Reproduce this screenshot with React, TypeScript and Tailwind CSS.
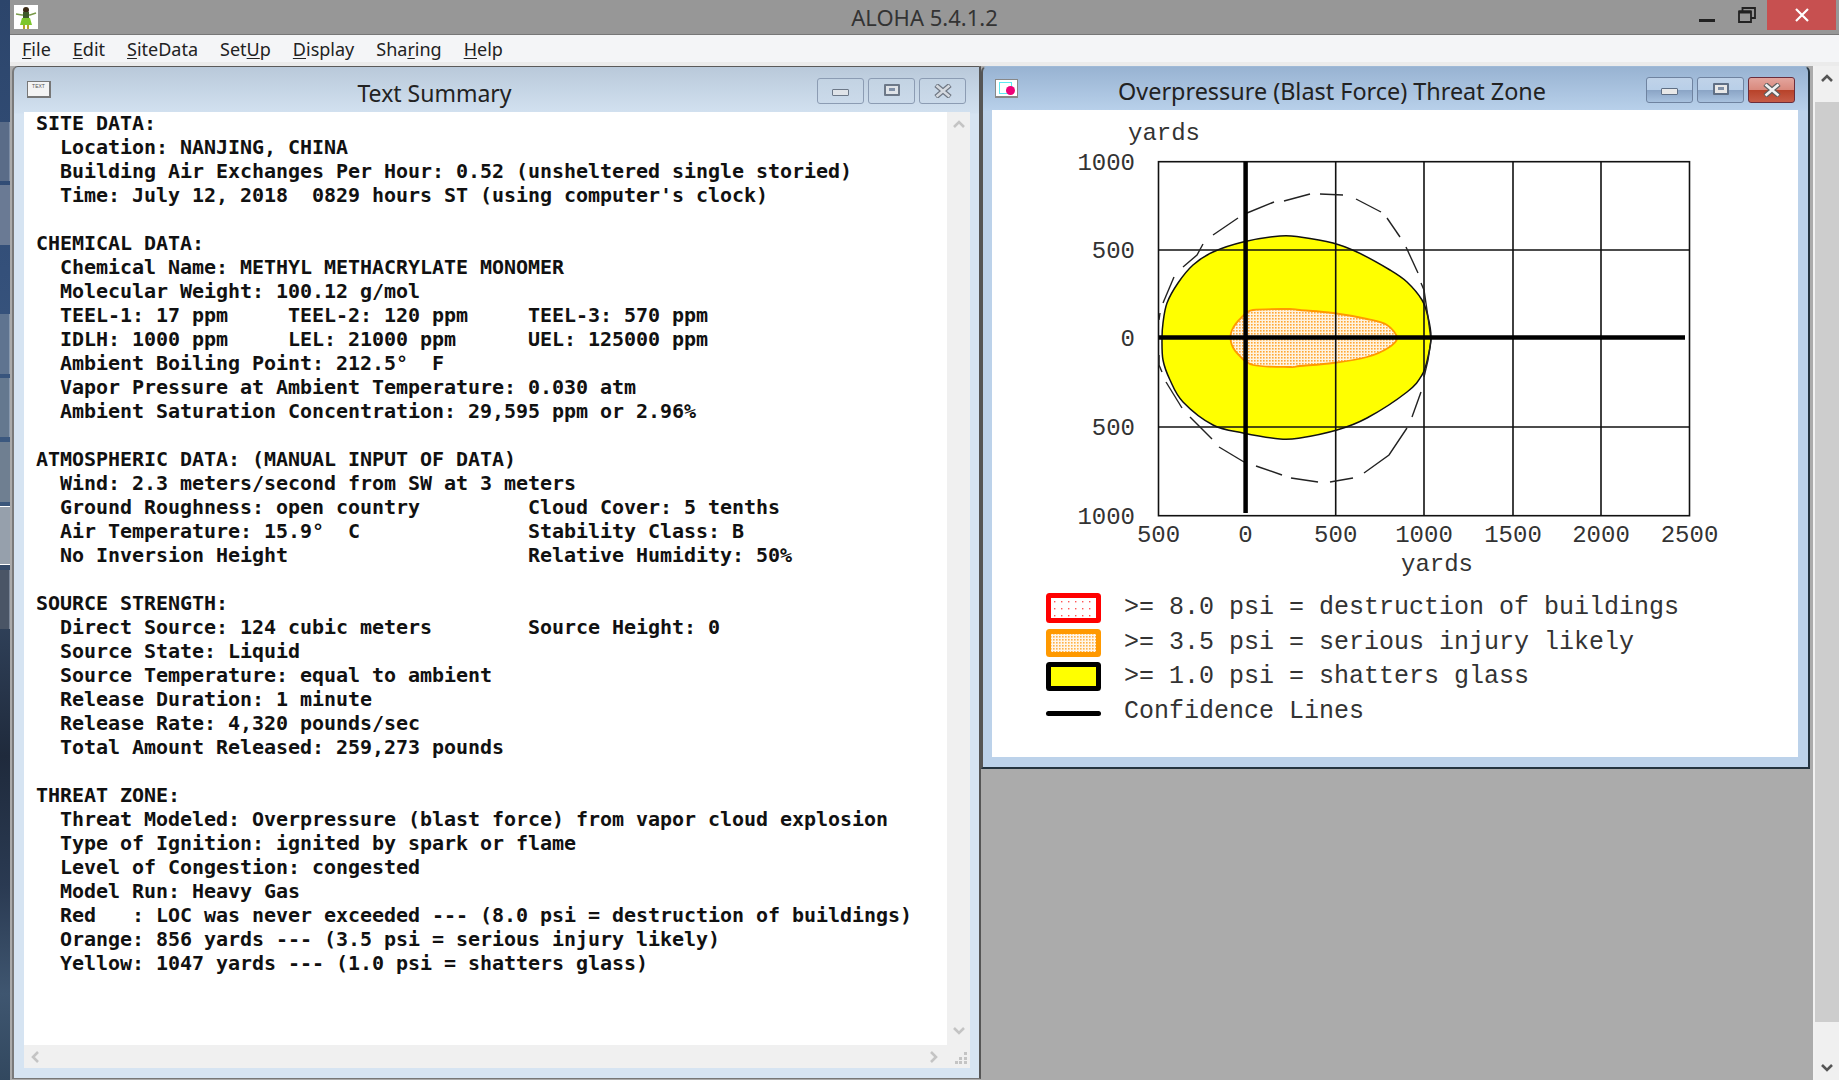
import React from 'react';

const SUMMARY = `SITE DATA:
  Location: NANJING, CHINA
  Building Air Exchanges Per Hour: 0.52 (unsheltered single storied)
  Time: July 12, 2018  0829 hours ST (using computer's clock)

CHEMICAL DATA:
  Chemical Name: METHYL METHACRYLATE MONOMER
  Molecular Weight: 100.12 g/mol
  TEEL-1: 17 ppm     TEEL-2: 120 ppm     TEEL-3: 570 ppm
  IDLH: 1000 ppm     LEL: 21000 ppm      UEL: 125000 ppm
  Ambient Boiling Point: 212.5°  F
  Vapor Pressure at Ambient Temperature: 0.030 atm
  Ambient Saturation Concentration: 29,595 ppm or 2.96%

ATMOSPHERIC DATA: (MANUAL INPUT OF DATA)
  Wind: 2.3 meters/second from SW at 3 meters
  Ground Roughness: open country         Cloud Cover: 5 tenths
  Air Temperature: 15.9°  C              Stability Class: B
  No Inversion Height                    Relative Humidity: 50%

SOURCE STRENGTH:
  Direct Source: 124 cubic meters        Source Height: 0
  Source State: Liquid
  Source Temperature: equal to ambient
  Release Duration: 1 minute
  Release Rate: 4,320 pounds/sec
  Total Amount Released: 259,273 pounds

THREAT ZONE:
  Threat Modeled: Overpressure (blast force) from vapor cloud explosion
  Type of Ignition: ignited by spark or flame
  Level of Congestion: congested
  Model Run: Heavy Gas
  Red   : LOC was never exceeded --- (8.0 psi = destruction of buildings)
  Orange: 856 yards --- (3.5 psi = serious injury likely)
  Yellow: 1047 yards --- (1.0 psi = shatters glass)`;

// chart points are screen positions, the svg starts at 992,110
type P = [number, number];
const sx = (x: number) => x - 992;
const sy = (y: number) => y - 110;

// closed catmull-rom so the outline goes through every measured point
const smooth = (pts: P[]) => {
  const m = pts.map(([x, y]) => [sx(x), sy(y)]);
  const n = m.length;
  let d = `M${m[0][0]} ${m[0][1]}`;
  for (let i = 0; i < n; i++) {
    const p0 = m[(i - 1 + n) % n];
    const p1 = m[i];
    const p2 = m[(i + 1) % n];
    const p3 = m[(i + 2) % n];
    const c1 = [p1[0] + (p2[0] - p0[0]) / 6, p1[1] + (p2[1] - p0[1]) / 6];
    const c2 = [p2[0] - (p3[0] - p1[0]) / 6, p2[1] - (p3[1] - p1[1]) / 6];
    d += `C${c1[0].toFixed(1)} ${c1[1].toFixed(1)} ${c2[0].toFixed(1)} ${c2[1].toFixed(1)} ${p2[0]} ${p2[1]}`;
  }
  return d + 'Z';
};

const YELLOW: P[] = [
  [1300, 237], [1333, 243], [1357, 252], [1390, 270], [1407, 282], [1422, 300], [1428, 317], [1431, 337],
  [1428, 357], [1422, 375], [1407, 392], [1367, 418], [1337, 430], [1300, 438], [1280, 439], [1243, 433],
  [1213, 425], [1183, 402], [1170, 380], [1163, 360], [1162, 338], [1163, 323], [1167, 303], [1178, 283],
  [1193, 265], [1213, 252], [1243, 242], [1280, 236],
];
const ORANGE: P[] = [
  [1300, 310], [1333, 313], [1367, 319], [1387, 325], [1397, 338], [1388, 348], [1367, 357], [1333, 363],
  [1300, 366], [1290, 367], [1253, 365], [1237, 353], [1231, 342], [1232, 330], [1242, 317], [1253, 310],
  [1290, 309],
];
const DASHES: P[][] = [
  [[1406, 247], [1418, 273]],
  [[1421, 283], [1424, 290], [1428, 317], [1431, 340], [1428, 360], [1424, 377]],
  [[1421, 392], [1412, 417]],
  [[1407, 428], [1389, 455], [1364, 473]],
  [[1353, 478], [1330, 482]],
  [[1318, 482], [1291, 478]],
  [[1282, 475], [1256, 466]],
  [[1244, 462], [1219, 447]],
  [[1212, 439], [1190, 417]],
  [[1182, 408], [1166, 382]],
  [[1162, 372], [1159, 365], [1159, 355]],
  [[1159, 320], [1160, 313]],
  [[1163, 303], [1174, 277]],
  [[1183, 267], [1197, 255], [1203, 244]],
  [[1213, 235], [1238, 218]],
  [[1247, 213], [1274, 202]],
  [[1284, 201], [1310, 194]],
  [[1320, 194], [1343, 195]],
  [[1356, 199], [1381, 212]],
  [[1387, 218], [1400, 237]],
];

const LEFT = 1158.5;
const RIGHT = 1689.5;
const TOP = 161.7;
const BOTTOM = 515.7;
const GRID_X = [1335.7, 1424, 1513, 1601];
const GRID_Y = [250, 427];
const X_LABELS: [number, string][] = [
  [1158.5, '500'], [1245.5, '0'], [1335.7, '500'], [1424, '1000'], [1513, '1500'], [1601, '2000'], [1689.5, '2500'],
];
const Y_LABELS: [number, string][] = [[161.7, '1000'], [250, '500'], [337.6, '0'], [427, '500'], [515.7, '1000']];

const Chevron = ({ dir, className }: { dir: 'up' | 'down' | 'left' | 'right'; className?: string }) => {
  const d = {
    up: 'M1 8 L6 3 L11 8',
    down: 'M1 3 L6 8 L11 3',
    left: 'M8 1 L3 6 L8 11',
    right: 'M3 1 L8 6 L3 11',
  }[dir];
  return (
    <svg width="12" height="12" viewBox="0 0 12 12" className={className}>
      <path d={d} fill="none" stroke="currentColor" strokeWidth="2.6" />
    </svg>
  );
};

const CaptionButtons = ({ active }: { active: boolean }) => {
  const base = active
    ? 'bg-[linear-gradient(180deg,#c0d3e9_0%,#b9cfe8_48%,#8ba5c6_52%,#a9c2df_100%)] border-[#6f83a0]'
    : 'bg-[linear-gradient(180deg,#c3d3e3_0%,#cbdaea_100%)] border-[#8c9cb3]';
  const glyph = active ? 'border-[#5f6f85] bg-[#e8e8e8]' : 'border-[#6c7888] bg-[#dfe3e8]';
  return (
    <div className="flex gap-[4px] mt-[2px]">
      <div className={`w-[47px] h-[26px] rounded-[3px] border flex items-center justify-center ${base}`}>
        <div className={`w-[17px] h-[7px] mt-[4px] rounded-[1px] border ${glyph}`} />
      </div>
      <div className={`w-[47px] h-[26px] rounded-[3px] border flex items-center justify-center ${base}`}>
        <div className={`w-[16px] h-[12px] mt-[-2px] rounded-[1px] border-2 flex items-center justify-center ${glyph}`}>
          <div className="w-[6px] h-[3px] bg-[#7f8fa6]" />
        </div>
      </div>
      <div
        className={`w-[47px] h-[26px] rounded-[3px] border flex items-center justify-center ${
          active
            ? 'bg-[linear-gradient(180deg,#e3a59d_0%,#d98a7e_48%,#b8432a_52%,#c65c48_100%)] border-[#6b2d3c]'
            : base
        }`}
      >
        <svg width="18" height="14" viewBox="0 0 18 14">
          <path d="M2 1 L16 13 M16 1 L2 13" stroke={active ? '#5e5e5e' : '#6e7682'} strokeWidth="5" />
          <path d="M2.5 1.5 L15.5 12.5 M15.5 1.5 L2.5 12.5" stroke={active ? '#f2f2f2' : '#d5dae0'} strokeWidth="2.6" />
        </svg>
      </div>
    </div>
  );
};

const Swatch = ({ border, dot, fill, id, h }: { border: string; dot?: string; fill: string; id: string; h: number }) => (
  <svg width="55" height={h} viewBox={`0 0 55 ${h}`} className="shrink-0">
    <defs>
      <pattern id={id} width={id === 'sw-red' ? 7 : 3} height={id === 'sw-red' ? 7 : 3} patternUnits="userSpaceOnUse">
        <rect width="7" height="7" fill={fill} />
        {dot && <rect x="1" y="1" width={id === 'sw-red' ? 1.4 : 1.6} height={id === 'sw-red' ? 1.4 : 1.6} fill={dot} />}
      </pattern>
    </defs>
    <rect x="2.5" y="2.5" width="50" height={h - 5} rx="1" fill={dot ? `url(#${id})` : fill} stroke={border} strokeWidth="5" />
  </svg>
);

const Legend = ({ children, swatch }: { children: string; swatch: React.ReactNode }) => (
  <div className="flex items-center h-[34.4px] gap-[23px]">
    <div className="w-[55px] flex items-center justify-center">{swatch}</div>
    <span className="whitespace-pre">{children}</span>
  </div>
);

const Chart = () => (
  <svg width="806" height="475" viewBox="0 0 806 475" className="block">
    <defs>
      <pattern id="orange-dots" width="3" height="3" patternUnits="userSpaceOnUse">
        <rect width="3" height="3" fill="#fff3e0" />
        <rect x="1" y="1" width="1.6" height="1.6" fill="#ffa733" />
      </pattern>
    </defs>
    <rect x={sx(LEFT)} y={sy(TOP)} width={RIGHT - LEFT} height={BOTTOM - TOP} fill="#fff" stroke="#111" strokeWidth="1.6" />
    <path d={smooth(YELLOW)} fill="#ffff00" stroke="#111" strokeWidth="1.5" />
    <path d={smooth(ORANGE)} fill="url(#orange-dots)" stroke="#ff9900" strokeWidth="1.8" />
    {GRID_X.map((x) => (
      <line key={x} x1={sx(x)} x2={sx(x)} y1={sy(TOP)} y2={sy(BOTTOM)} stroke="#111" strokeWidth="1.6" />
    ))}
    {GRID_Y.map((y) => (
      <line key={y} x1={sx(LEFT)} x2={sx(RIGHT)} y1={sy(y)} y2={sy(y)} stroke="#111" strokeWidth="1.6" />
    ))}
    {DASHES.map((seg, i) => (
      <polyline
        key={i}
        points={seg.map(([x, y]) => `${sx(x)},${sy(y)}`).join(' ')}
        fill="none"
        stroke="#222"
        strokeWidth="1.4"
      />
    ))}
    <line x1={sx(1245.6)} x2={sx(1245.6)} y1={sy(TOP)} y2={sy(513)} stroke="#000" strokeWidth="4.5" />
    <line x1={sx(1159)} x2={sx(1685)} y1={sy(337.5)} y2={sy(337.5)} stroke="#000" strokeWidth="4.5" />
    <g fontFamily="'Liberation Mono', monospace" fontSize="24" fill="#333">
      <text x="136" y="30">yards</text>
      {Y_LABELS.map(([y, t], i) => (
        <text key={i} x="143" y={sy(y) + 8} textAnchor="end">{t}</text>
      ))}
      {X_LABELS.map(([x, t], i) => (
        <text key={i} x={sx(x)} y="432" textAnchor="middle">{t}</text>
      ))}
      <text x="445" y="461" textAnchor="middle">yards</text>
    </g>
  </svg>
);

const TextWindow = () => (
  <div className="w-[969px] h-[1013px] ml-[2px] flex flex-col rounded-tl-[6px] border-l-2 border-t border-r-2 border-b border-t-[#5a5a5a] border-l-[#7a7a7a] border-r-[#555] border-b-[#777] bg-[#d6e4f2] bg-[linear-gradient(180deg,#b9c9da_0px,#d2e1f0_46px,#d6e4f2_47px)]">
    <div className="h-[45px] shrink-0 flex items-center pl-[13px] pr-[13px]">
      <div className="w-[24px] h-[17px] border border-[#777] border-b-2 border-r-2 bg-[#f4f4f4] flex justify-center overflow-hidden">
        <span className="text-[5px] leading-[8px] text-[#555] font-['Liberation_Sans',sans-serif]">TEXT</span>
      </div>
      <div className="flex-1 text-center text-[#222] text-[23px] leading-none mt-[7px] ml-[1px] font-['Noto_Sans',sans-serif]">Text Summary</div>
      <CaptionButtons active={false} />
    </div>
    <div className="flex-1 flex flex-col ml-[10px] mr-[9px] mb-[10px] min-h-0">
      <div className="flex-1 flex min-h-0">
        <div className="flex-1 bg-white pl-[12px] overflow-hidden">
          <pre className="mt-[-1px] font-['DejaVu_Sans_Mono',monospace] font-bold text-[20px] leading-[24px] tracking-[-0.04px] text-[#111]">{SUMMARY}</pre>
        </div>
        <div className="w-[23px] bg-[#f0f0f0] flex flex-col items-center justify-between pt-[7px] pb-[8px] text-[#c4c4c4]">
          <Chevron dir="up" />
          <Chevron dir="down" />
        </div>
      </div>
      <div className="h-[23px] shrink-0 bg-[#f0f0f0] flex items-center justify-between pl-[6px] pr-[2px] text-[#c4c4c4]">
        <Chevron dir="left" />
        <div className="flex items-center gap-[14px]">
          <Chevron dir="right" />
          <svg width="14" height="14" viewBox="0 0 14 14" className="mt-[3px]">
            <path d="M10 1h3v3h-3zM5 6h3v3H5zM10 6h3v3h-3zM1 10h3v3H1zM5 10h3v3H5zM10 10h3v3h-3z" fill="#c4c4c4" />
          </svg>
        </div>
      </div>
    </div>
  </div>
);

const ThreatWindow = () => (
  <div className="w-[829px] h-[703px] flex flex-col rounded-t-[6px] border-t border-[#9fb9d6] border-r-2 border-r-[#23333f] border-b-2 border-b-[#23333f] border-l-2 border-l-[#555] bg-[#bcd2ea] bg-[linear-gradient(180deg,#98b3d2_0px,#b8d0ea_43px,#bcd2ea_44px)]">
    <div className="h-[43px] shrink-0 flex items-center pl-[12px] pr-[13px]">
      <div className="w-[23px] h-[19px] border border-[#888] border-b-2 bg-white relative">
        <div className="absolute left-[3px] top-[2px] w-[13px] h-[12px] border border-[#5fe8f0]" />
        <div className="absolute left-[10px] top-[6px] w-[9px] h-[9px] rounded-full bg-[#ee0077]" />
      </div>
      <div className="flex-1 text-center text-[#222] text-[23.4px] leading-none mt-[7px] font-['Noto_Sans',sans-serif]">
        Overpressure (Blast Force) Threat Zone
      </div>
      <CaptionButtons active />
    </div>
    <div className="flex-1 ml-[9px] mr-[10px] mb-[10px] bg-white flex flex-col">
      <Chart />
      <div className="pl-[54px] mt-[6px] font-['Liberation_Mono',monospace] text-[25px] text-[#333]">
        <Legend swatch={<Swatch id="sw-red" border="#ff0000" dot="#ff5555" fill="#ffffff" h={30} />}>{'>= 8.0 psi = destruction of buildings'}</Legend>
        <Legend swatch={<Swatch id="sw-orange" border="#ff9900" dot="#ffb347" fill="#fff6ea" h={28} />}>{'>= 3.5 psi = serious injury likely'}</Legend>
        <Legend swatch={<Swatch id="sw-yellow" border="#000000" fill="#ffff00" h={29} />}>{'>= 1.0 psi = shatters glass'}</Legend>
        <Legend swatch={<div className="w-[55px] h-[5px] rounded-full bg-black mt-[4px]" />}>Confidence Lines</Legend>
      </div>
    </div>
  </div>
);

const Wallpaper = () => (
  <div className="w-[10px] h-full shrink-0 flex flex-col bg-[linear-gradient(180deg,#2c456b_0%,#34507a_25%,#3d5a80_45%,#2f4058_58%,#1f2a3c_70%,#2a3a52_82%,#3f5670_92%,#32485f_100%)]">
    <div className="h-[122px] shrink-0" />
    <div className="h-[59px] shrink-0 mb-[4px] bg-[#5a6c88] border-r border-[#7c8ca4]" />
    <div className="h-[60px] shrink-0 bg-[#6a7a94]" />
    <div className="h-[69px] shrink-0" />
    <div className="h-[60px] shrink-0 mb-[4px] bg-[#5f7490] border-r border-[#8899ae]" />
    <div className="h-[59px] shrink-0 mb-[5px] bg-[#64788f] border-r border-[#8899ae]" />
    <div className="h-[60px] shrink-0 mb-[4px] bg-[#6f7f91]" />
    <div className="h-[59px] shrink-0 mb-[5px] bg-[#96a0ac] border-y border-white" />
    <div className="h-[59px] shrink-0 bg-[#4a5566] border-r border-[#7c8798]" />
  </div>
);

export default function App() {
  return (
    <div className="w-[1839px] h-[1080px] flex overflow-hidden bg-[#ababab] font-['Noto_Sans',sans-serif]">
      <Wallpaper />
      <div className="flex-1 flex flex-col min-w-0">
        <div className="h-[35px] shrink-0 bg-[#979797] border-b border-[#777] flex items-start justify-between relative">
          <div className="absolute inset-0 text-center text-[#333] text-[22px] leading-[34px]">ALOHA 5.4.1.2</div>
          <div className="relative w-[24px] h-[24px] ml-[4px] mt-[5px] bg-white shrink-0">
            <svg width="24" height="24" viewBox="0 0 24 24">
              <circle cx="12" cy="5" r="3" fill="#3a2a14" />
              <path d="M2 9 L8 10 L16 10 L22 8" stroke="#7a9a4a" strokeWidth="1.6" fill="none" />
              <rect x="9" y="7" width="6" height="6" fill="#3f5a2a" />
              <path d="M8 13 H16 L18 20 H6 Z" fill="#7ec62e" />
              <rect x="9" y="20" width="2" height="4" fill="#b5a52a" />
              <rect x="13" y="20" width="2" height="4" fill="#b5a52a" />
            </svg>
          </div>
          <div className="relative flex items-start shrink-0">
            <div className="w-[40px] h-[30px] flex items-center justify-center">
              <div className="w-[16px] h-[3px] mt-[10px] bg-[#222]" />
            </div>
            <div className="w-[40px] h-[30px] flex items-center justify-center">
              <svg width="18" height="16" viewBox="0 0 18 16">
                <path d="M1 4.5H13V15H1Z M4.5 4V1H17V11H13.5" fill="none" stroke="#222" strokeWidth="1.8" />
                <path d="M1 5H13" stroke="#222" strokeWidth="3" />
              </svg>
            </div>
            <div className="w-[69px] h-[30px] mr-[3px] bg-[#c75050] flex items-center justify-center">
              <svg width="14" height="14" viewBox="0 0 14 14">
                <path d="M1 1 L13 13 M13 1 L1 13" stroke="#fff" strokeWidth="2.2" />
              </svg>
            </div>
          </div>
        </div>
        <div className="h-[27px] shrink-0 bg-[#f4f5f7] flex items-center pl-[12px] pt-[2px] gap-[22px] text-[18px] text-[#222]">
          <span><span className="underline underline-offset-2">F</span>ile</span>
          <span><span className="underline underline-offset-2">E</span>dit</span>
          <span><span className="underline underline-offset-2">S</span>iteData</span>
          <span>Set<span className="underline underline-offset-2">U</span>p</span>
          <span><span className="underline underline-offset-2">D</span>isplay</span>
          <span>Sha<span className="underline underline-offset-2">r</span>ing</span>
          <span><span className="underline underline-offset-2">H</span>elp</span>
        </div>
        <div className="h-[4px] shrink-0 bg-[#ebebeb]" />
        <div className="flex-1 flex items-start min-h-0">
          <TextWindow />
          <ThreatWindow />
          <div className="flex-1" />
          <div className="w-[26px] h-full border-l-2 border-[#f2f2f2] flex flex-col bg-[#f0f0f0] text-[#555]">
            <div className="h-[36px] flex items-start justify-center pt-[7px]">
              <Chevron dir="up" />
            </div>
            <div className="h-[920px] bg-[#cdcdcd]" />
            <div className="flex-1 flex items-end justify-center pb-[6px]">
              <Chevron dir="down" />
            </div>
          </div>
        </div>
      </div>
    </div>
  );
}
